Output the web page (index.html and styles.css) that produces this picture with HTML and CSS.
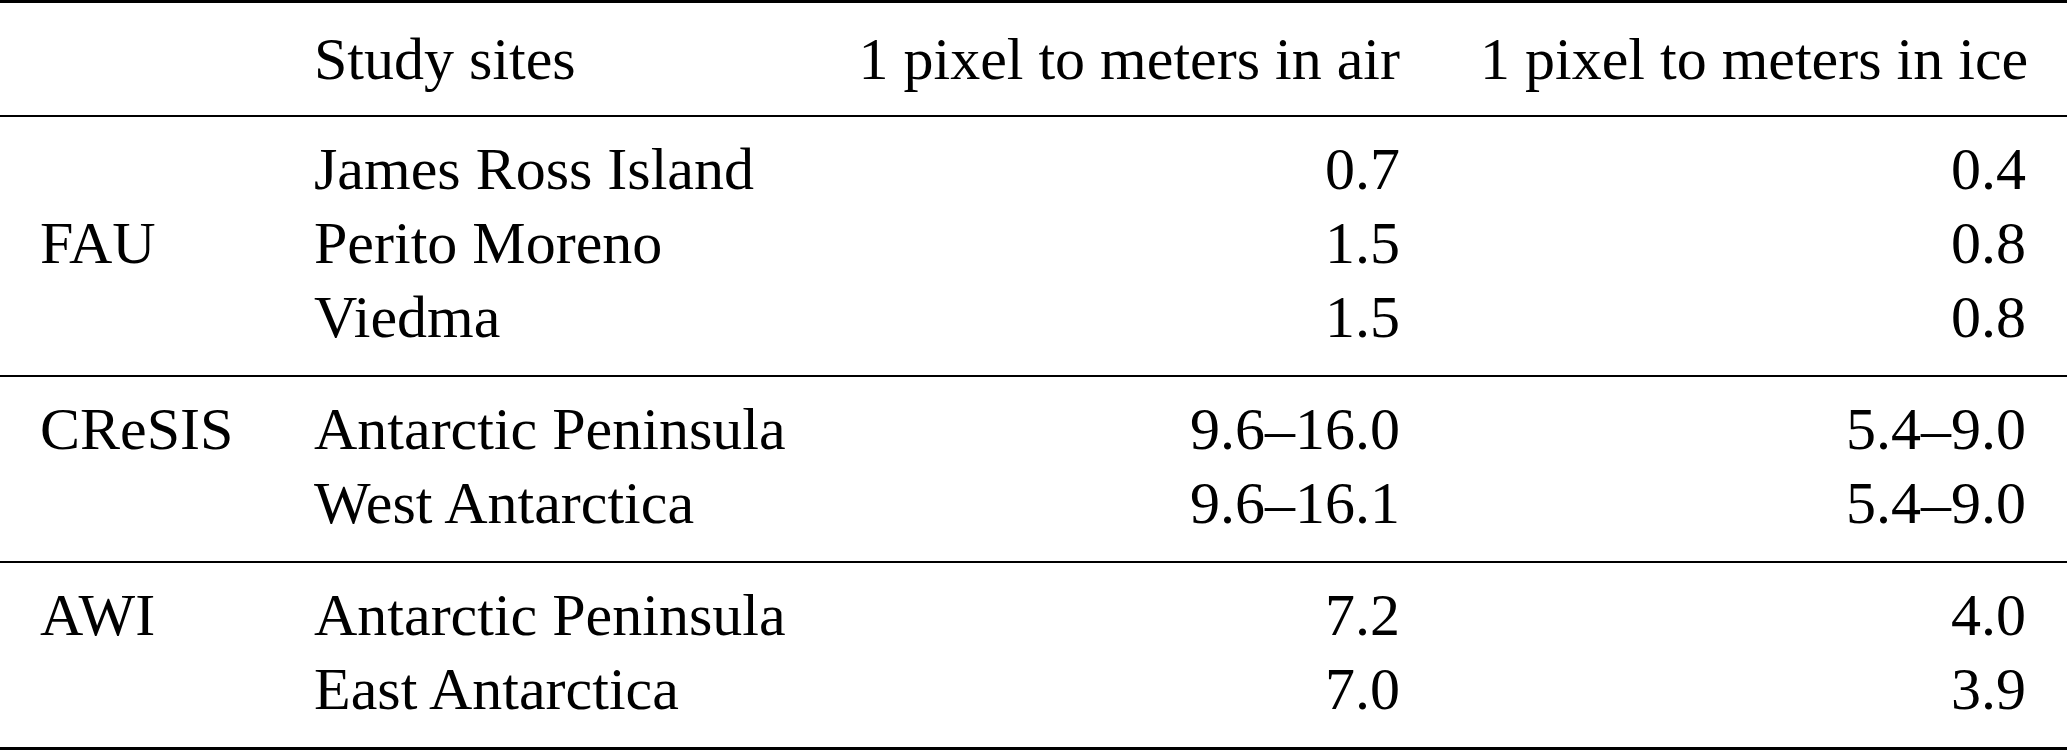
FILE: index.html
```html
<!DOCTYPE html>
<html lang="en">
<head>
  <meta charset="UTF-8">
  <meta name="viewport" content="width=device-width, initial-scale=1.0">
  <title>Pixel resolution per study site</title>
  <link rel="stylesheet" href="styles.css">
</head>
<body>
  <table class="sites">
    <colgroup>
      <col class="col-source">
      <col class="col-site">
      <col class="col-air">
      <col class="col-ice">
    </colgroup>
    <thead>
      <tr>
        <th></th>
        <th class="text">Study sites</th>
        <th class="num">1 pixel to meters in air</th>
        <th class="num">1 pixel to meters in ice</th>
      </tr>
    </thead>
    <tbody>
      <tr class="first">
        <td></td>
        <td>James Ross Island</td>
        <td class="num">0.7</td>
        <td class="num">0.4</td>
      </tr>
      <tr>
        <td>FAU</td>
        <td>Perito Moreno</td>
        <td class="num">1.5</td>
        <td class="num">0.8</td>
      </tr>
      <tr class="last">
        <td></td>
        <td>Viedma</td>
        <td class="num">1.5</td>
        <td class="num">0.8</td>
      </tr>
    </tbody>
    <tbody>
      <tr class="first">
        <td>CReSIS</td>
        <td>Antarctic Peninsula</td>
        <td class="num">9.6–16.0</td>
        <td class="num">5.4–9.0</td>
      </tr>
      <tr class="last">
        <td></td>
        <td>West Antarctica</td>
        <td class="num">9.6–16.1</td>
        <td class="num">5.4–9.0</td>
      </tr>
    </tbody>
    <tbody class="bottom">
      <tr class="first">
        <td>AWI</td>
        <td>Antarctic Peninsula</td>
        <td class="num">7.2</td>
        <td class="num">4.0</td>
      </tr>
      <tr class="last">
        <td></td>
        <td>East Antarctica</td>
        <td class="num">7.0</td>
        <td class="num">3.9</td>
      </tr>
    </tbody>
  </table>
</body>
</html>
```

FILE: styles.css
```css
body {
  margin: 0;
  background: #fff;
  color: #000;
  font-family: 'Liberation Serif', 'Times New Roman', serif;
}
.sites {
  width: 100%;
  border-collapse: collapse;
  table-layout: fixed;
  font-size: 60px;
  line-height: 74px;
  border-top: 3px solid #000;
  border-bottom: 3px solid #000;
}
.col-source { width: 274px; }
.col-site { width: 544px; }
.col-air { width: 622px; }
.col-ice { width: 627px; }
th, td {
  padding: 0 40px;
  font-weight: normal;
  text-align: left;
  white-space: nowrap;
  vertical-align: top;
}
th {
  padding-top: 19px;
  padding-bottom: 19px;
}
td:last-child, th:last-child {
  padding-right: 41px;
}
.num {
  text-align: right;
}
thead tr {
  border-bottom: 2px solid #000;
}
tbody {
  border-bottom: 2px solid #000;
}
tbody.bottom {
  border-bottom: none;
}
tr.first td {
  padding-top: 15px;
}
tr.last td {
  padding-bottom: 21px;
}
```
